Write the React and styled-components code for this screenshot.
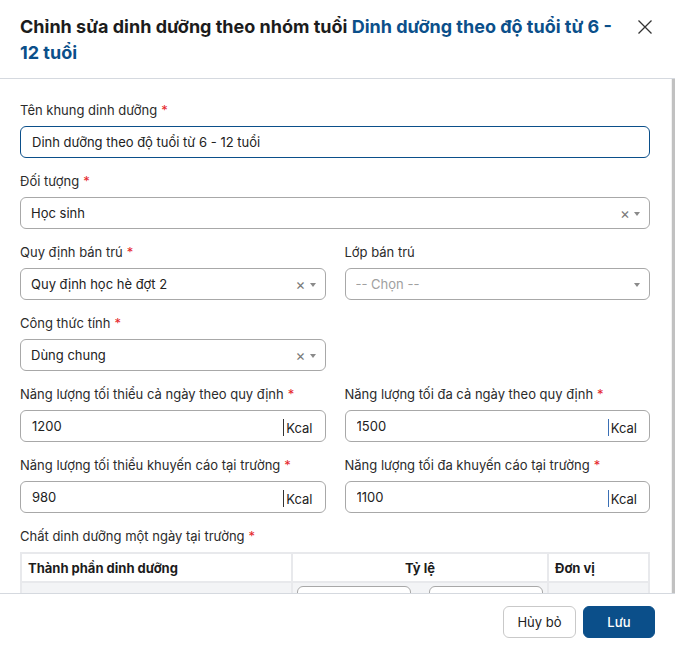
import React from "react";
import styled, { createGlobalStyle } from "styled-components";

const Global = createGlobalStyle`
  html, body, #root { height: 100%; margin: 0; padding: 0; }
  body { font-family: Inter, "Noto Sans", sans-serif; background: #fff; color: #222; }
  * { box-sizing: border-box; }
`;

const BLUE = "#0b4f8a";

const Modal = styled.div`
  height: 100vh;
  display: flex;
  flex-direction: column;
  background: #fff;
`;

const Header = styled.div`
  display: flex;
  align-items: flex-start;
  justify-content: space-between;
  padding: 14px 20px 0 20px;
  border-bottom: 1px solid #d5d9df;
  height: 79px;
  flex-shrink: 0;
`;

const Title = styled.h2`
  margin: 0;
  font-size: 18px;
  line-height: 26px;
  font-weight: 700;
  color: #1c1c1c;
  max-width: 605px;
`;

const TitleAccent = styled.span`
  color: ${BLUE};
`;

const CloseButton = styled.button`
  border: none;
  background: none;
  padding: 0;
  margin-top: 5px;
  margin-right: 2px;
  width: 16px;
  height: 16px;
  display: flex;
  cursor: pointer;
`;

const BodyWrap = styled.div`
  flex: 1;
  min-height: 0;
  position: relative;
`;

const Body = styled.div`
  height: 100%;
  overflow: hidden;
  padding: 21px 25px 20px 20px;
`;

const ScrollTrack = styled.div`
  position: absolute;
  top: 0;
  right: 0;
  bottom: 0;
  width: 4px;
  background: #f1f1f1;
  padding-left: 1px;
`;

const ScrollThumb = styled.div`
  height: 100%;
  background: #c1c1c1;
`;

const Row = styled.div`
  display: grid;
  grid-template-columns: 1fr 1fr;
  column-gap: 19px;
`;

const Field = styled.div`
  margin-bottom: 13px;
`;

const Label = styled.div`
  font-size: 13px;
  line-height: 20px;
  color: #2b2b2b;
  margin-bottom: 6px;
`;

const Req = styled.span`
  color: #e5252a;
  margin-left: 4px;
`;

const Box = styled.div`
  height: 32px;
  border: 1px solid ${(p) => (p.$focus ? BLUE : "#a8a8a8")};
  border-radius: 6px;
  display: flex;
  align-items: center;
  padding: 0 ${(p) => (p.$addon ? "0" : "9px")} 0 11px;
  font-size: 13px;
  color: ${(p) => (p.$placeholder ? "#a0a0a0" : "#222")};
  background: #fff;
`;

const Value = styled.span`
  flex: 1;
  white-space: nowrap;
  overflow: hidden;
`;

const SelValue = styled(Value)`
  margin-left: -1px;
`;

const Clear = styled.span`
  color: #7a7a7a;
  font-size: 15px;
  line-height: 1;
  margin-right: 4px;
`;

const Caret = styled.span`
  width: 0;
  height: 0;
  border-left: 3.5px solid transparent;
  border-right: 3.5px solid transparent;
  border-top: 4px solid #8a8a8a;
  margin-top: 1px;
`;

const Addon = styled.span`
  border-left: 1px solid ${(p) => p.$color};
  height: 17px;
  padding: 0 12px 0 2px;
  display: flex;
  align-items: center;
  font-size: 13px;
  color: #222;
  margin-top: 3px;
`;

const Table = styled.table`
  width: 100%;
  border-collapse: collapse;
  font-size: 13px;
`;

const Th = styled.th`
  border: 2px solid #e8e9ec;
  padding: 5px 6px;
  height: 29px;
  text-align: ${(p) => p.$align || "left"};
  font-weight: 700;
  color: #1c1c1c;
  width: ${(p) => p.$w};
`;

const Td = styled.td`
  border: 2px solid #e8e9ec;
  background: #f3f4f6;
  padding: 3px 4px;
  height: 40px;
`;

const TdInputs = styled.div`
  display: flex;
  gap: 18px;
`;

const SmallInput = styled.div`
  flex: 1;
  height: 32px;
  border: 1px solid #a8a8a8;
  border-radius: 6px;
  background: #fff;
`;

const Footer = styled.div`
  border-top: 1px solid #d5d9df;
  display: flex;
  justify-content: flex-end;
  gap: 7px;
  padding: 12px 20px 11px;
  flex-shrink: 0;
`;

const Button = styled.button`
  height: 32px;
  width: ${(p) => p.$w}px;
  border-radius: 6px;
  font-family: Inter, sans-serif;
  font-size: 13px;
  font-weight: ${(p) => (p.$primary ? 500 : 400)};
  border: 1px solid ${(p) => (p.$primary ? BLUE : "#c9c9c9")};
  background: ${(p) => (p.$primary ? BLUE : "#fff")};
  color: ${(p) => (p.$primary ? "#fff" : "#222")};
  cursor: pointer;
`;

function Select({ value, placeholder, clearable = true }) {
  return (
    <Box $placeholder={!value}>
      <SelValue>{value || placeholder}</SelValue>
      {clearable && value && <Clear>×</Clear>}
      <Caret />
    </Box>
  );
}

function EnergyInput({ value, bar }) {
  return (
    <Box $addon>
      <Value>{value}</Value>
      <Addon $color={bar}>Kcal</Addon>
    </Box>
  );
}

function FieldLabel({ children, required }) {
  return (
    <Label>
      {children}
      {required && <Req>*</Req>}
    </Label>
  );
}

const rows = [0, 1, 2];

export default function App() {
  return (
    <>
      <Global />
      <Modal>
        <Header>
          <Title>
            Chỉnh sửa dinh dưỡng theo nhóm tuổi{" "}
            <TitleAccent>Dinh dưỡng theo độ tuổi từ 6 - 12 tuổi</TitleAccent>
          </Title>
          <CloseButton aria-label="Đóng">
            <svg width="16" height="16" viewBox="0 0 16 16">
              <path d="M1.5 1.5 L14.5 14.5 M14.5 1.5 L1.5 14.5" stroke="#333" strokeWidth="1.3" fill="none" />
            </svg>
          </CloseButton>
        </Header>
        <BodyWrap>
          <Body>
            <Field>
              <FieldLabel required>Tên khung dinh dưỡng</FieldLabel>
              <Box $focus>
                <Value>Dinh dưỡng theo độ tuổi từ 6 - 12 tuổi</Value>
              </Box>
            </Field>
            <Field>
              <FieldLabel required>Đối tượng</FieldLabel>
              <Select value="Học sinh" />
            </Field>
            <Row>
              <Field>
                <FieldLabel required>Quy định bán trú</FieldLabel>
                <Select value="Quy định học hè đợt 2" />
              </Field>
              <Field>
                <FieldLabel>Lớp bán trú</FieldLabel>
                <Select placeholder="-- Chọn --" />
              </Field>
            </Row>
            <Row>
              <Field>
                <FieldLabel required>Công thức tính</FieldLabel>
                <Select value="Dùng chung" />
              </Field>
            </Row>
            <Row>
              <Field>
                <FieldLabel required>Năng lượng tối thiểu cả ngày theo quy định</FieldLabel>
                <EnergyInput value="1200" bar="#333" />
              </Field>
              <Field>
                <FieldLabel required>Năng lượng tối đa cả ngày theo quy định</FieldLabel>
                <EnergyInput value="1500" bar="#3a6fb5" />
              </Field>
            </Row>
            <Row>
              <Field>
                <FieldLabel required>Năng lượng tối thiểu khuyến cáo tại trường</FieldLabel>
                <EnergyInput value="980" bar="#333" />
              </Field>
              <Field>
                <FieldLabel required>Năng lượng tối đa khuyến cáo tại trường</FieldLabel>
                <EnergyInput value="1100" bar="#3a6fb5" />
              </Field>
            </Row>
            <FieldLabel required>Chất dinh dưỡng một ngày tại trường</FieldLabel>
            <Table>
              <thead>
                <tr>
                  <Th $w="271px">Thành phần dinh dưỡng</Th>
                  <Th $w="256px" $align="center">Tỷ lệ</Th>
                  <Th>Đơn vị</Th>
                </tr>
              </thead>
              <tbody>
                {rows.map((r) => (
                  <tr key={r}>
                    <Td />
                    <Td>
                      <TdInputs>
                        <SmallInput />
                        <SmallInput />
                      </TdInputs>
                    </Td>
                    <Td />
                  </tr>
                ))}
              </tbody>
            </Table>
          </Body>
          <ScrollTrack>
            <ScrollThumb />
          </ScrollTrack>
        </BodyWrap>
        <Footer>
          <Button $w={73}>Hủy bỏ</Button>
          <Button $w={72} $primary>Lưu</Button>
        </Footer>
      </Modal>
    </>
  );
}
